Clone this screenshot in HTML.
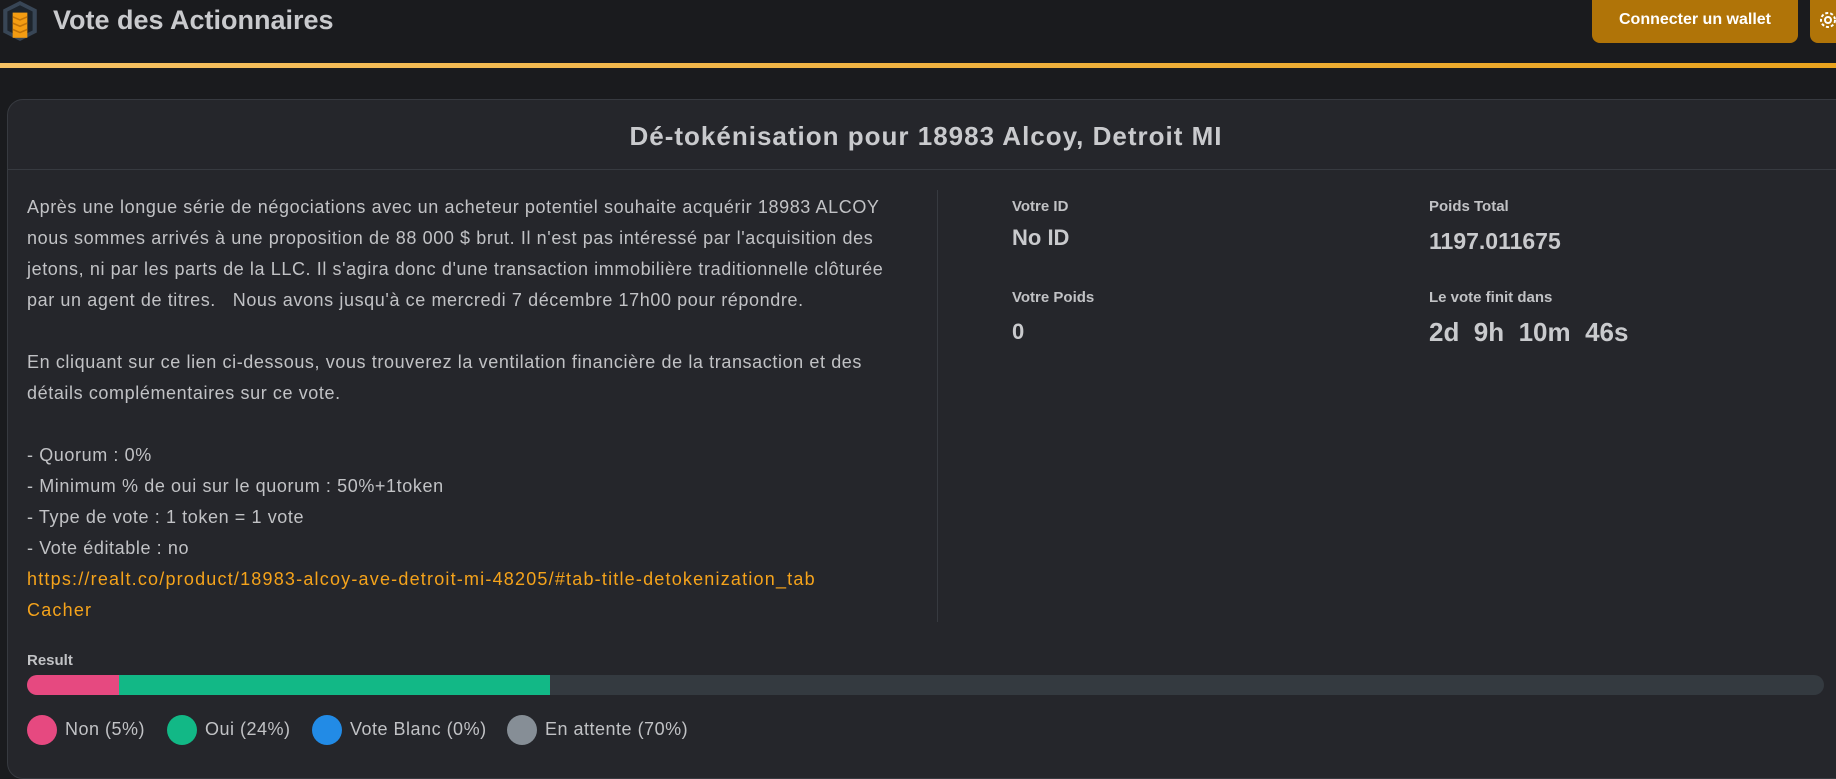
<!DOCTYPE html>
<html><head><meta charset="utf-8"><style>
*{margin:0;padding:0;box-sizing:border-box}
body{width:1836px;height:758px;overflow:hidden;background:#1a1b1e;font-family:"Liberation Sans",sans-serif;color:#c1c2c5;position:relative}
.abs{position:absolute;white-space:nowrap}
.hdr{font-weight:bold;font-size:27px;color:#c9cacd;left:53px;top:5px}
.line{position:absolute;left:0;top:63px;width:1836px;height:5px;background:linear-gradient(90deg,#f6c264,#e9a31e)}
.btn{position:absolute;left:1592px;top:-8px;width:206px;height:51px;background:#b07408;border-radius:8px;color:#fff;font-weight:bold;font-size:16px;text-align:center;padding-top:19px}
.gear{position:absolute;left:1810px;top:-8px;width:50px;height:51px;background:#b07408;border-radius:8px}
.card{position:absolute;left:7px;top:99px;width:1845px;height:680px;background:#25262b;border:1px solid #373a40;border-radius:16px}
.sep{position:absolute;left:8px;top:169px;width:1828px;height:1px;background:#373a40}
.title{font-weight:bold;font-size:26px;letter-spacing:1px;color:#c9cacd;left:8px;width:1836px;text-align:center;top:121px}
.txt{font-size:18px;letter-spacing:0.6px;line-height:31px;left:27px;top:192px}
.link{color:#f5a31b;letter-spacing:1.2px}
.vd{position:absolute;left:937px;top:190px;width:1px;height:432px;background:#373a40}
.lbl{font-size:15px;font-weight:bold;color:#c1c2c5}
.v1{font-size:22px;font-weight:bold;color:#c9cacd}
.v2{font-size:26px;font-weight:bold;color:#c9cacd}
.bar{position:absolute;left:27px;top:675px;width:1797px;height:20px;background:#343a40;border-radius:10px;overflow:hidden}
.dot{position:absolute;top:715px;width:30px;height:30px;border-radius:50%}
.lg{font-size:18px;letter-spacing:0.5px;top:719px}
</style></head><body>
<svg class="abs" style="left:0;top:0" width="40" height="42" viewBox="0 0 36 40"><path d="M18 1 L34 9 L34 31 L18 39 L2 31 L2 9Z" fill="#384656"/><path d="M18 5 L30 11 L30 29 L18 35 L6 29 L6 11Z" fill="#1d242c"/><rect x="11" y="12" width="14" height="24" fill="#f39c12"/><path d="M11 16 L18 19 L25 16 M11 22 L18 25 L25 22 M11 28 L18 31 L25 28" stroke="#c27408" stroke-width="1.5" fill="none"/></svg>
<div class="abs hdr">Vote des Actionnaires</div>
<div class="btn">Connecter un wallet</div>
<div class="gear"><svg style="position:absolute;left:8px;top:18px" width="20" height="20" viewBox="0 0 20 20"><circle cx="10" cy="10" r="3" fill="none" stroke="#fff" stroke-width="2"/><circle cx="10" cy="10" r="7" fill="none" stroke="#fff" stroke-width="2" stroke-dasharray="3 2"/></svg></div>
<div class="line"></div>
<div class="card"></div>
<div class="sep"></div>
<div class="abs title">Dé-tokénisation pour 18983 Alcoy, Detroit MI</div>
<div class="abs txt">Après une longue série de négociations avec un acheteur potentiel souhaite acquérir 18983 ALCOY<br>nous sommes arrivés à une proposition de 88 000 $ brut. Il n'est pas intéressé par l'acquisition des<br>jetons, ni par les parts de la LLC. Il s'agira donc d'une transaction immobilière traditionnelle clôturée<br>par un agent de titres.&nbsp;&nbsp; Nous avons jusqu'à ce mercredi 7 décembre 17h00 pour répondre.<br><br>En cliquant sur ce lien ci-dessous, vous trouverez la ventilation financière de la transaction et des<br>détails complémentaires sur ce vote.<br><br>- Quorum : 0%<br>- Minimum % de oui sur le quorum : 50%+1token<br>- Type de vote : 1 token = 1 vote<br>- Vote éditable : no<br><span class="link">https://realt.co/product/18983-alcoy-ave-detroit-mi-48205/#tab-title-detokenization_tab</span><br><span class="link">Cacher</span></div>
<div class="vd"></div>
<div class="abs lbl" style="left:1012px;top:198px">Votre ID</div>
<div class="abs v1" style="left:1012px;top:225px">No ID</div>
<div class="abs lbl" style="left:1012px;top:289px">Votre Poids</div>
<div class="abs v1" style="left:1012px;top:319px">0</div>
<div class="abs lbl" style="left:1429px;top:198px">Poids Total</div>
<div class="abs v2" style="left:1429px;top:228px;font-size:23px">1197.011675</div>
<div class="abs lbl" style="left:1429px;top:289px">Le vote finit dans</div>
<div class="abs v2" style="left:1429px;top:317px">2d&nbsp; 9h&nbsp; 10m&nbsp; 46s</div>
<div class="abs lbl" style="left:27px;top:652px">Result</div>
<div class="bar"><div style="position:absolute;left:0;top:0;width:92px;height:20px;background:#e64980"></div><div style="position:absolute;left:92px;top:0;width:431px;height:20px;background:#12b886"></div></div>
<div class="dot" style="left:27px;background:#e64980"></div><div class="abs lg" style="left:65px">Non (5%)</div>
<div class="dot" style="left:167px;background:#12b886"></div><div class="abs lg" style="left:205px">Oui (24%)</div>
<div class="dot" style="left:312px;background:#228be6"></div><div class="abs lg" style="left:350px">Vote Blanc (0%)</div>
<div class="dot" style="left:507px;background:#868e96"></div><div class="abs lg" style="left:545px">En attente (70%)</div>
</body></html>
